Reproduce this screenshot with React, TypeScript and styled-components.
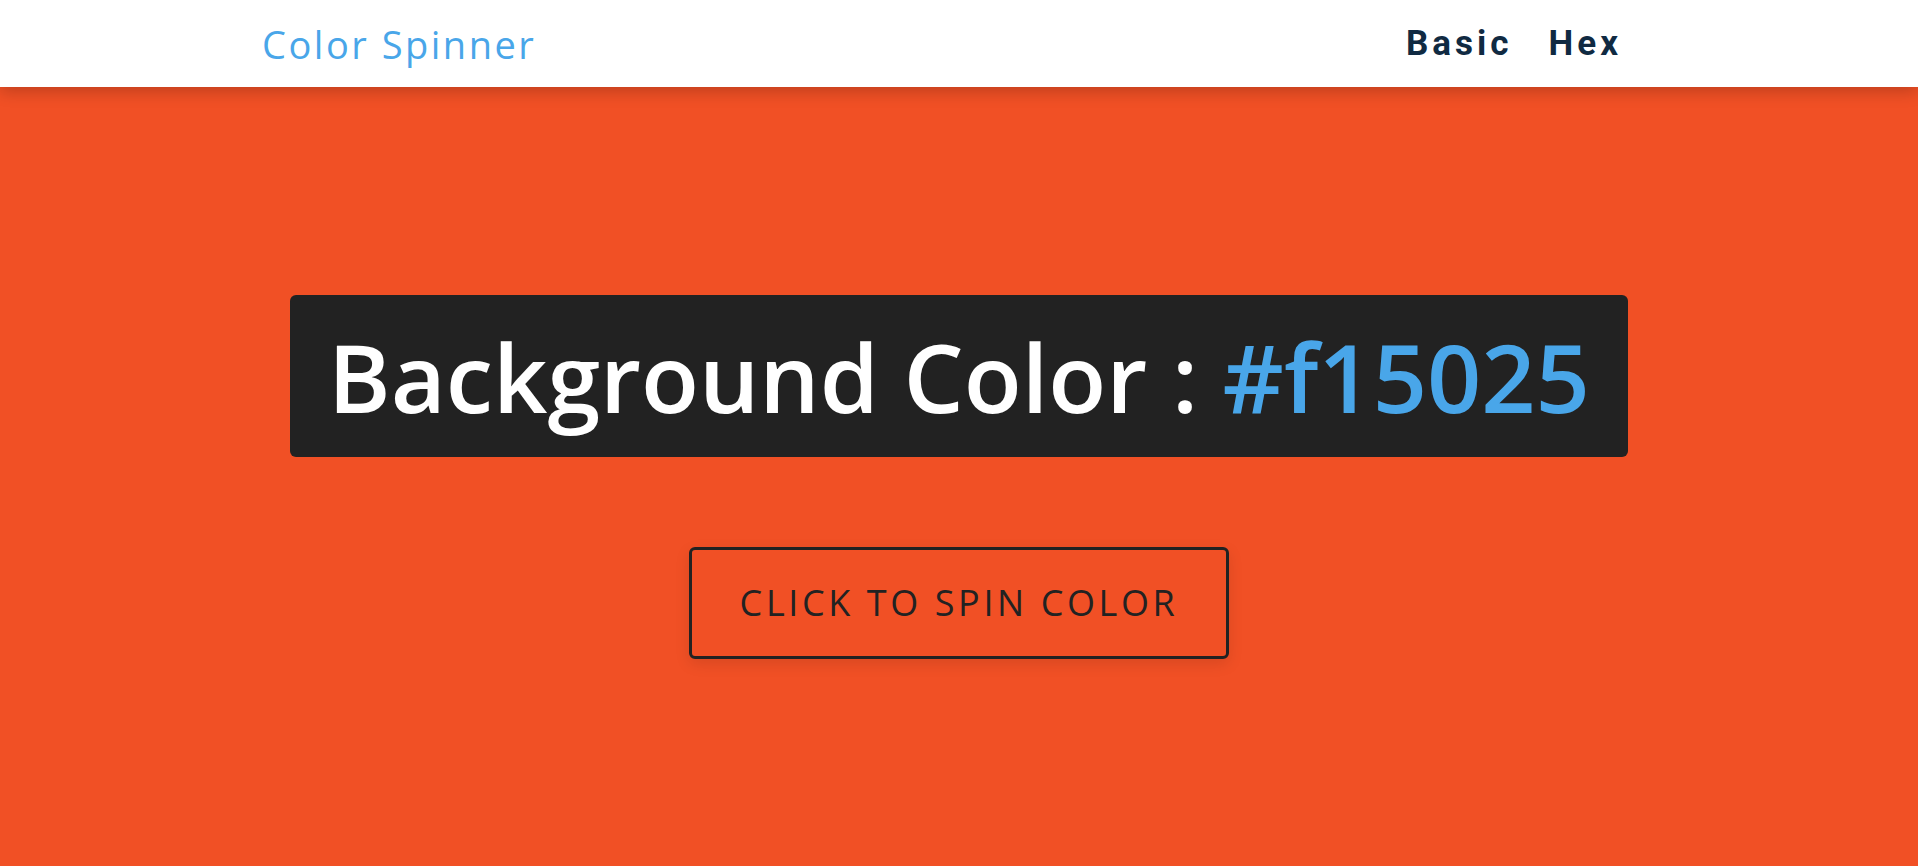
import React from "react";
import styled, { createGlobalStyle } from "styled-components";

const GlobalStyle = createGlobalStyle`
  * { box-sizing: border-box; }
  html, body { margin: 0; padding: 0; }
  body {
    font-family: "Open Sans", "Noto Sans", sans-serif;
    background: #f15025;
    overflow: hidden;
  }
`;

const Nav = styled.nav`
  position: relative;
  z-index: 2;
  height: 87px;
  background: #ffffff;
  box-shadow: 0 5px 15px rgba(0, 0, 0, 0.2);
  display: flex;
  align-items: center;
  justify-content: space-between;
  padding: 0 296px 0 262px;
`;

const Logo = styled.h4`
  margin: 0;
  font-family: "Open Sans", sans-serif;
  font-weight: 400;
  font-size: 38px;
  letter-spacing: 2.5px;
  color: #49a6e9;
`;

const Links = styled.ul`
  display: flex;
  gap: 36px;
  list-style: none;
  margin: 0;
  padding: 0;
`;

const LinkItem = styled.a`
  font-family: Roboto, "Liberation Sans", sans-serif;
  font-weight: 700;
  font-size: 35px;
  letter-spacing: 4px;
  color: #102a42;
  text-decoration: none;
`;

const Main = styled.main`
  height: calc(100vh - 87px);
  display: grid;
  place-items: center;
  background: #f15025;
`;

const Container = styled.div`
  display: flex;
  flex-direction: column;
  align-items: center;
  gap: 90px;
  text-align: center;
`;

const Banner = styled.h2`
  margin: 0;
  background: #222222;
  color: #ffffff;
  font-family: "Open Sans", sans-serif;
  font-weight: 600;
  font-size: 95px;
  line-height: 162px;
  height: 162px;
  padding: 0 38px;
  border-radius: 6px;
  letter-spacing: 0;
  white-space: nowrap;
`;

const ColorValue = styled.span`
  color: #49a6e9;
`;

const SpinButton = styled.button`
  font-family: "Open Sans", sans-serif;
  text-transform: uppercase;
  background: transparent;
  color: #222222;
  letter-spacing: 3.6px;
  font-weight: 400;
  font-size: 36px;
  line-height: 50px;
  border: 3px solid #222222;
  border-radius: 6px;
  padding: 28px 48px;
  box-shadow: 0 5px 15px rgba(0, 0, 0, 0.1);
  cursor: pointer;
`;

export default function App() {
  return (
    <>
      <GlobalStyle />
      <Nav>
        <Logo>Color Spinner</Logo>
        <Links>
          <li>
            <LinkItem href="#">Basic</LinkItem>
          </li>
          <li>
            <LinkItem href="#">Hex</LinkItem>
          </li>
        </Links>
      </Nav>
      <Main>
        <Container>
          <Banner>
            Background Color : <ColorValue>#f15025</ColorValue>
          </Banner>
          <SpinButton>click to spin color</SpinButton>
        </Container>
      </Main>
    </>
  );
}
